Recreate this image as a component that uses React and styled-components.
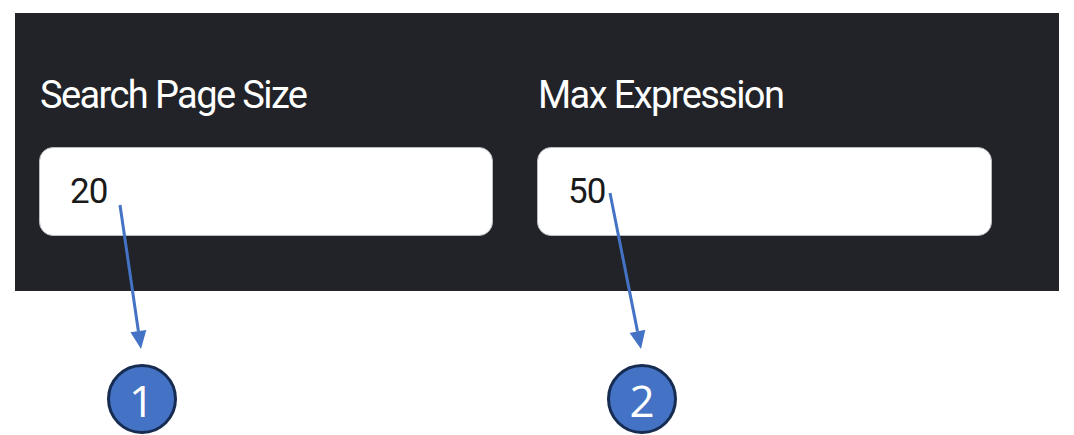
import React from 'react'
import styled, { createGlobalStyle } from 'styled-components'

const Global = createGlobalStyle`
  html, body {
    margin: 0;
    padding: 0;
    background: #ffffff;
  }
`

const Page = styled.div`
  position: relative;
  width: 1074px;
  height: 435px;
  overflow: hidden;
  background: #ffffff;
`

const Panel = styled.div`
  margin: 13px 0 0 15px;
  width: 1044px;
  box-sizing: border-box;
  padding: 60px 0 55px 24px;
  background: #212328;
  display: grid;
  grid-template-columns: 454px 455px;
  column-gap: 44px;
`

const Field = styled.div`
  display: flex;
  flex-direction: column;
  gap: 28px;
`

const Label = styled.label`
  font-family: Roboto, "Liberation Sans", sans-serif;
  font-size: 38px;
  line-height: 1.2;
  color: #ffffff;
  padding-left: 1px;
  letter-spacing: -1.6px;
`

const Input = styled.input`
  box-sizing: border-box;
  width: 100%;
  height: 89px;
  padding: 0 0 0 30px;
  border: 1px solid #b9bcc0;
  border-radius: 14px;
  background: #ffffff;
  font-family: Roboto, "Liberation Sans", sans-serif;
  font-size: 35px;
  letter-spacing: -1px;
  color: #1a1a1a;
  outline: none;
`

const Arrows = styled.svg`
  position: absolute;
  left: 0;
  top: 0;
  pointer-events: none;
`

const Badge = styled.div`
  position: absolute;
  left: ${p => p.x - 35}px;
  top: ${p => p.y - 35}px;
  width: 70px;
  height: 70px;
  box-sizing: border-box;
  border-radius: 50%;
  background: #4472c4;
  border: 3px solid #172c51;
  display: flex;
  align-items: center;
  justify-content: center;
  color: #ffffff;
  font-family: "Open Sans", Lato, sans-serif;
  font-size: 44px;
  line-height: 1;
  padding-top: 2px;
`

const fields = [
  { label: 'Search Page Size', value: '20' },
  { label: 'Max Expression', value: '50' },
]

const arrows = [
  { x1: 120, y1: 205, x2: 141, y2: 349 },
  { x1: 610, y1: 193, x2: 641, y2: 349 },
]

const Arrow = ({ x1, y1, x2, y2 }) => {
  const dx = x2 - x1
  const dy = y2 - y1
  const len = Math.hypot(dx, dy)
  const ux = dx / len
  const uy = dy / len
  const head = 18
  const half = 8
  const bx = x2 - ux * head
  const by = y2 - uy * head
  const pts = [
    `${x2},${y2}`,
    `${bx - uy * half},${by + ux * half}`,
    `${bx + uy * half},${by - ux * half}`,
  ].join(' ')
  return (
    <g>
      <line x1={x1} y1={y1} x2={bx} y2={by} stroke="#4472c4" strokeWidth="3" />
      <polygon points={pts} fill="#4472c4" />
    </g>
  )
}

export default function App() {
  return (
    <Page>
      <Global />
      <Panel>
        {fields.map(f => (
          <Field key={f.label}>
            <Label>{f.label}</Label>
            <Input defaultValue={f.value} readOnly />
          </Field>
        ))}
      </Panel>
      <Arrows width="1074" height="435">
        {arrows.map((a, i) => <Arrow key={i} {...a} />)}
      </Arrows>
      <Badge x={141.5} y={399}>1</Badge>
      <Badge x={642} y={399}>2</Badge>
    </Page>
  )
}
